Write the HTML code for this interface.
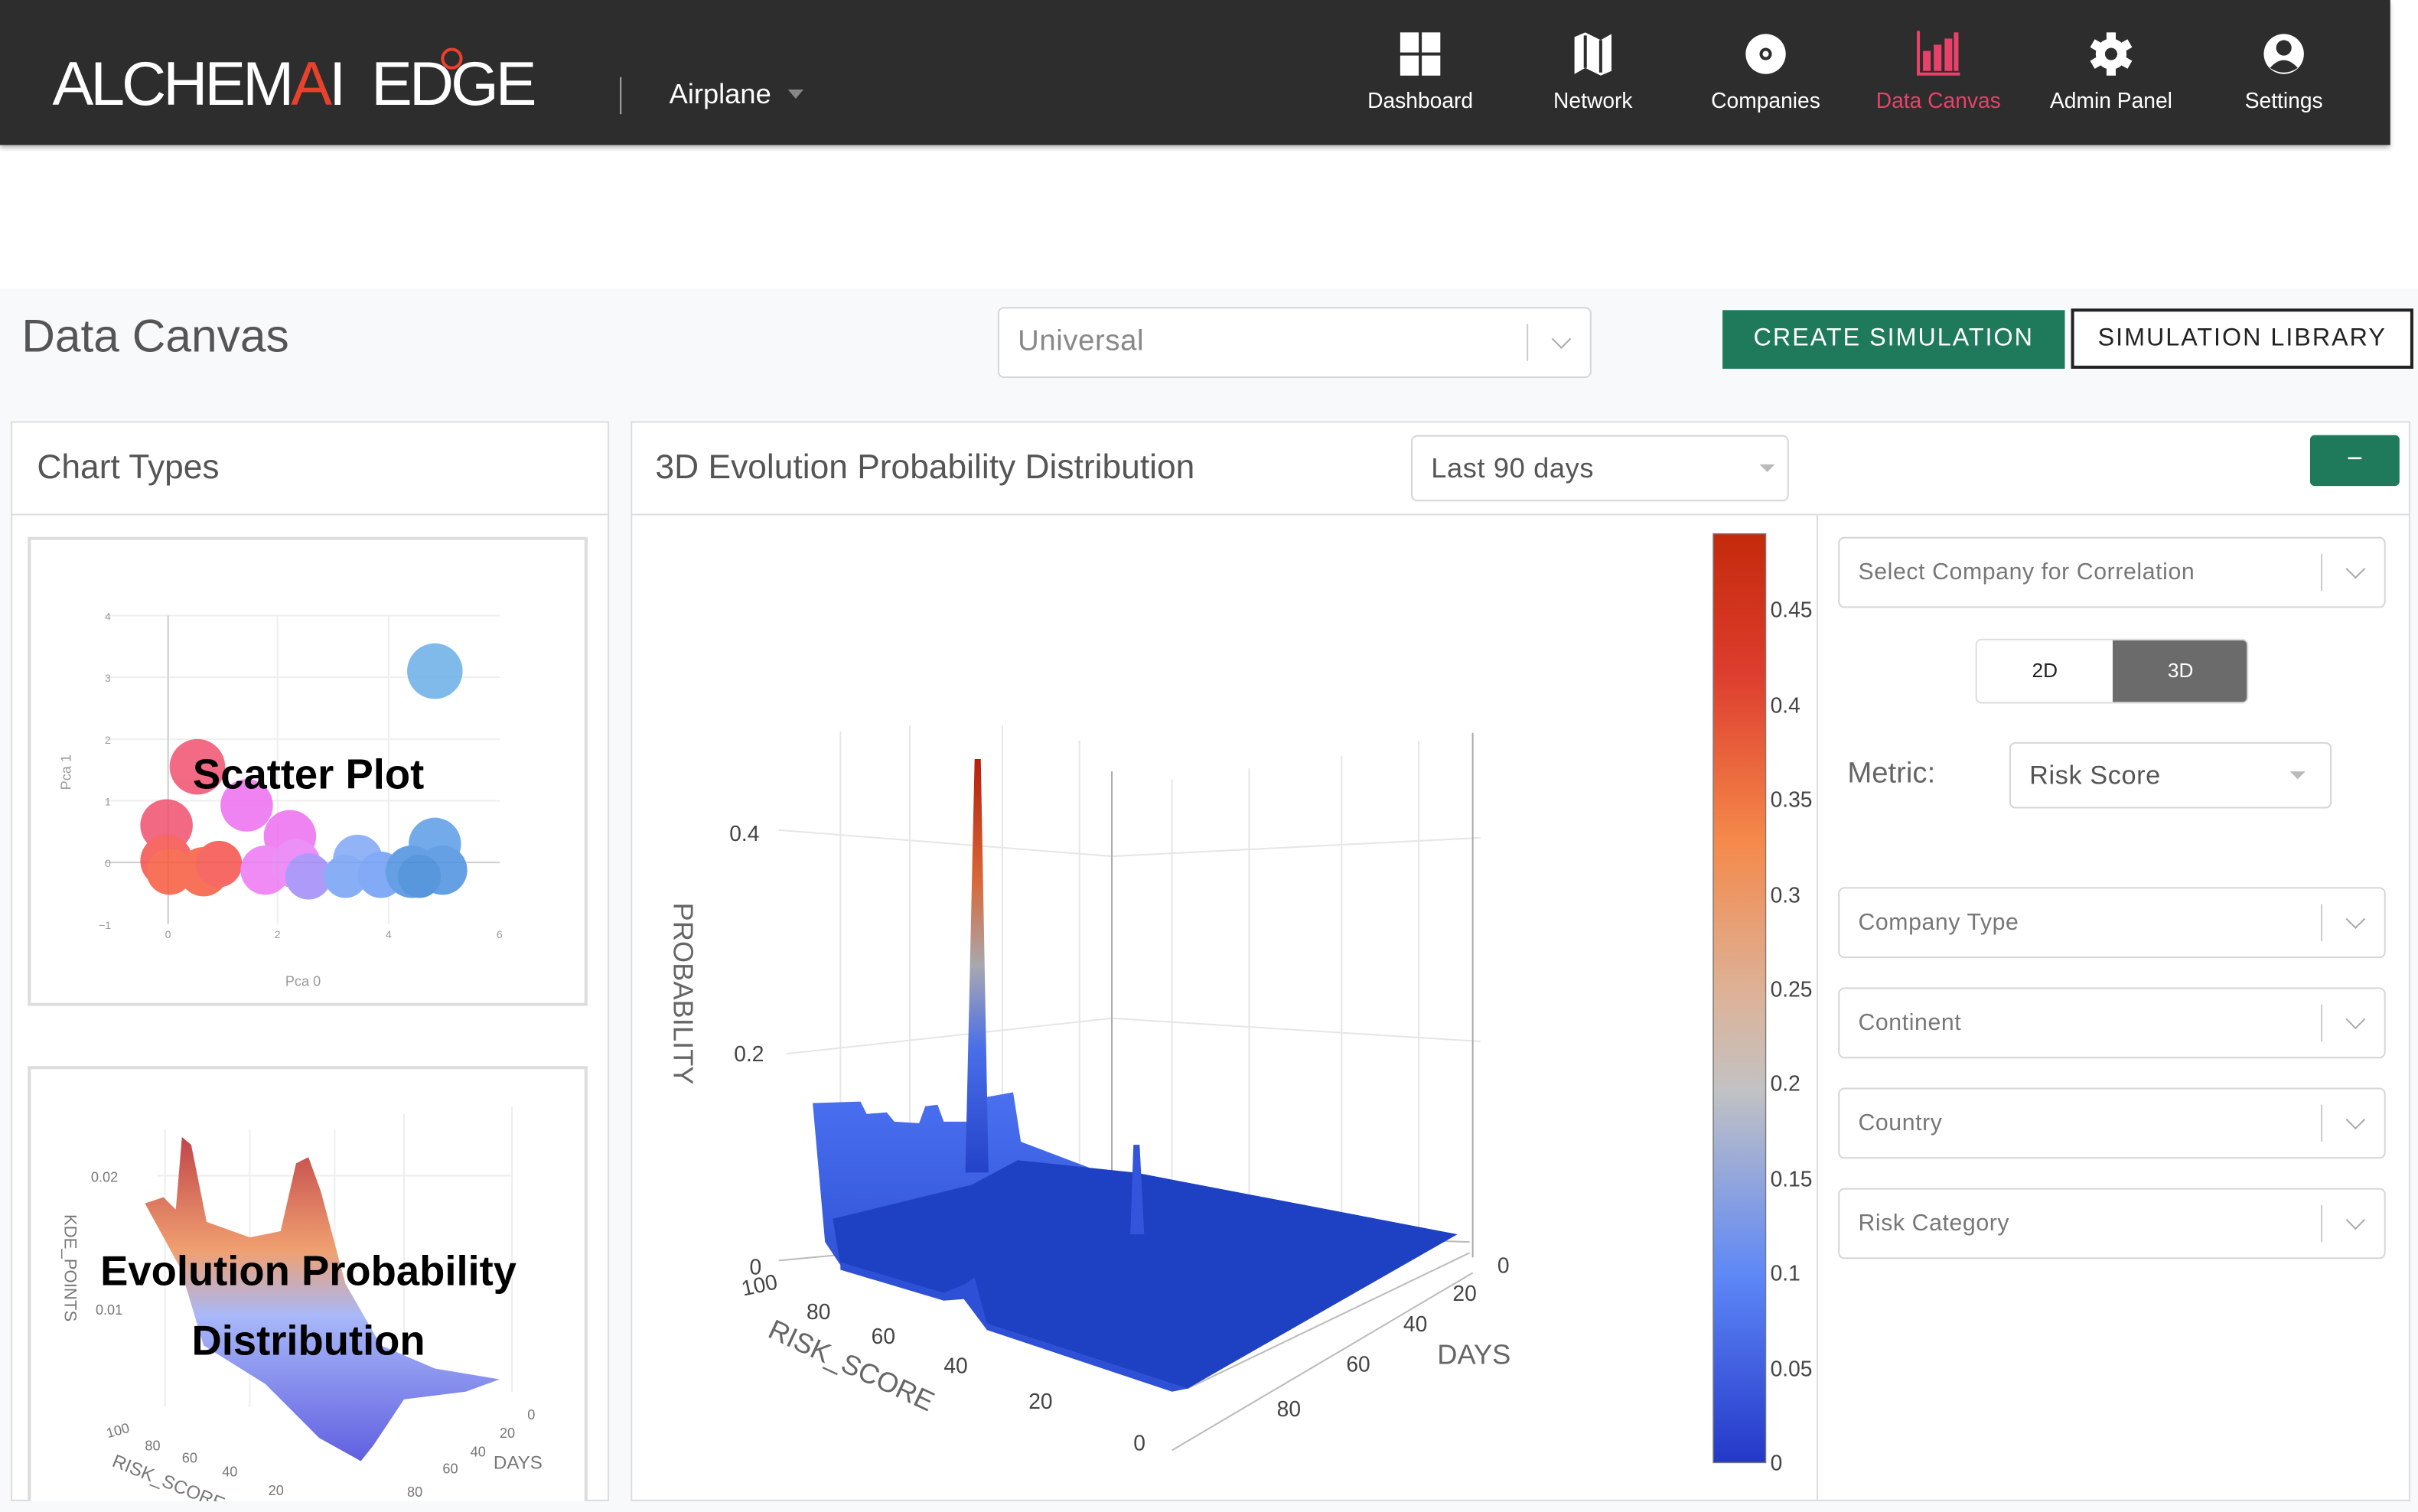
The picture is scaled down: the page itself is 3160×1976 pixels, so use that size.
<!DOCTYPE html>
<html><head><meta charset="utf-8">
<style>
*{box-sizing:border-box;margin:0;padding:0}
html,body{width:3160px;height:1976px;overflow:hidden;background:#fff;font-family:"Liberation Sans",sans-serif}
#root{position:absolute;left:0;top:0;width:1568px;height:980px;transform-origin:0 0;transform:scale(2.01531,2.01633);background:#fff}
.abs{position:absolute}
.nav{left:0;top:0;width:1550px;height:94px;background:#2d2d2d;box-shadow:0 2px 3px rgba(0,0,0,.3)}
.navitem{position:absolute;top:20px;width:110px;text-align:center;color:#fff;font-size:14px}
.navitem svg{display:block;margin:0 auto 7px;height:30px}
.bg{left:0;top:187px;width:1568px;height:793px;background:#f8f9fb}
.sel{position:absolute;background:#fff;border:1px solid #d6d6d6;border-radius:4px;color:#777;font-size:15px}
.sel .t{position:absolute;left:12px;top:50%;transform:translateY(-50%);letter-spacing:.3px}
.sel .bar{position:absolute;right:40px;top:10px;bottom:10px;width:1px;background:#ccc}
.sel .chev{position:absolute;right:14px;top:50%;width:9px;height:9px;border-right:1.5px solid #aaa;border-bottom:1.5px solid #aaa;transform:translateY(-75%) rotate(45deg)}
.panel{position:absolute;background:#fff;border:1px solid #ddd}
</style></head><body><div id="root">

<div class="abs nav">
  <div class="abs" style="left:34px;top:33px;color:#fff;font-size:40px;line-height:44px;letter-spacing:-2px">ALCHEM<span style="color:#e8412c">A</span>I&nbsp;&nbsp;ED<span style="position:relative">G<span style="position:absolute;left:-6px;top:-2px;width:14px;height:14px;border:2px solid #e8412c;border-radius:50%"></span></span>E</div>
  <div class="abs" style="left:402px;top:50px;width:1px;height:24px;background:#aaa"></div>
  <div class="abs" style="left:434px;top:51px;color:#fff;font-size:18px">Airplane</div>
  <div class="abs" style="left:511px;top:58px;width:0;height:0;border-left:5px solid transparent;border-right:5px solid transparent;border-top:6px solid #888"></div>

  <div class="navitem" style="left:866px"><svg width="28" viewBox="0 0 28 30"><rect x="1" y="1" width="12" height="13" fill="#fff"/><rect x="15" y="1" width="12" height="13" fill="#fff"/><rect x="1" y="16" width="12" height="13" fill="#fff"/><rect x="15" y="16" width="12" height="13" fill="#fff"/></svg>Dashboard</div>
  <div class="navitem" style="left:978px"><svg width="28" viewBox="0 0 28 30"><path d="M2 4 L9 1 L19 6 L26 2 L26 26 L19 29 L9 24 L2 28 Z" fill="#fff"/><path d="M9 3 L9 24 M19 6 L19 27" stroke="#2d2d2d" stroke-width="2"/></svg>Network</div>
  <div class="navitem" style="left:1090px"><svg width="28" viewBox="0 0 28 30"><circle cx="14" cy="15" r="13" fill="#fff"/><circle cx="14" cy="15" r="4" fill="#2d2d2d"/><circle cx="14" cy="15" r="2" fill="#fff"/></svg>Companies</div>
  <div class="navitem" style="left:1202px;color:#e8416a"><svg width="30" viewBox="0 0 30 30"><path d="M2 0 V28 H29" stroke="#e8416a" stroke-width="2" fill="none"/><rect x="5" y="13" width="5" height="13" fill="#e8416a"/><rect x="12" y="9" width="5" height="17" fill="#e8416a"/><rect x="19" y="5" width="5" height="21" fill="#e8416a"/><rect x="25" y="1" width="3" height="25" fill="#e8416a"/></svg>Data Canvas</div>
  <div class="navitem" style="left:1314px"><svg width="28" viewBox="0 0 28 30"><g transform="translate(14 15)"><g fill="#fff"><rect x="-3" y="-14" width="6" height="28"/><rect x="-3" y="-14" width="6" height="28" transform="rotate(60)"/><rect x="-3" y="-14" width="6" height="28" transform="rotate(120)"/><circle r="10"/></g><circle r="4" fill="#2d2d2d"/></g></svg>Admin Panel</div>
  <div class="navitem" style="left:1426px"><svg width="28" viewBox="0 0 28 30"><circle cx="14" cy="15" r="13" fill="#fff"/><circle cx="14" cy="11" r="5" fill="#2d2d2d"/><path d="M5 24 Q14 14 23 24 Q14 30 5 24Z" fill="#2d2d2d"/></svg>Settings</div>
</div>

<div class="abs bg"></div>
<div class="abs" style="left:14px;top:202px;font-size:30px;color:#555">Data Canvas</div>
<div class="sel" style="left:647px;top:199px;width:385px;height:46px;font-size:19px;color:#888"><span class="t">Universal</span><span class="bar"></span><span class="chev"></span></div>
<div class="abs" style="left:1117px;top:201px;width:222px;height:38px;background:#1e7a5a;color:#fff;font-size:16px;letter-spacing:1px;text-align:center;line-height:38px">CREATE SIMULATION</div>
<div class="abs" style="left:1343px;top:200px;width:222px;height:39px;border:2px solid #222;background:#fff;color:#222;font-size:16px;letter-spacing:1px;text-align:center;line-height:35px">SIMULATION LIBRARY</div>

<div class="panel" style="left:7px;top:273px;width:388px;height:700px"></div>
<div class="abs" style="left:7px;top:333px;width:388px;height:1px;background:#ddd"></div>
<div class="abs" style="left:24px;top:290px;font-size:22px;color:#555">Chart Types</div>

<div class="abs" style="left:18px;top:348px;width:363px;height:304px;border:2px solid #ddd;background:#fff">
<svg width="359" height="300" viewBox="18 348 359 300" style="position:absolute;left:0;top:0">
 <g stroke="#eee"><line x1="66" y1="397" x2="322" y2="397"/><line x1="66" y1="437" x2="322" y2="437"/><line x1="66" y1="477" x2="322" y2="477"/><line x1="66" y1="517" x2="322" y2="517"/><line x1="178" y1="397" x2="178" y2="597"/><line x1="250" y1="397" x2="250" y2="597"/></g>
 <line x1="107" y1="397" x2="107" y2="597" stroke="#ccc"/><line x1="66" y1="557" x2="322" y2="557" stroke="#ccc"/>
 <g font-size="7" fill="#999"><text x="66" y="400">4</text><text x="66" y="440">3</text><text x="66" y="480">2</text><text x="66" y="520">1</text><text x="66" y="560">0</text><text x="62" y="600">−1</text><text x="105" y="606">0</text><text x="176" y="606">2</text><text x="248" y="606">4</text><text x="320" y="606">6</text><text x="183" y="637" font-size="9">Pca 0</text><text x="44" y="510" font-size="9" transform="rotate(-90 44 510)">Pca 1</text></g>
 <g opacity="0.85">
 <circle cx="280" cy="433" r="18" fill="#6aaee6"/>
 <circle cx="126" cy="495" r="18" fill="#f0506e"/>
 <circle cx="106" cy="533" r="17" fill="#f0506e"/><circle cx="106" cy="556" r="17" fill="#f5504a"/><circle cx="108" cy="563" r="15" fill="#f65a3c"/><circle cx="130" cy="563" r="16" fill="#f65a3c"/><circle cx="140" cy="558" r="15" fill="#f5504a"/>
 <circle cx="158" cy="520" r="17" fill="#ee6ef0"/><circle cx="186" cy="540" r="17" fill="#ee6ef0"/><circle cx="170" cy="562" r="16" fill="#ee77f5"/><circle cx="190" cy="558" r="16" fill="#e97cf5"/>
 <circle cx="198" cy="566" r="15" fill="#a08af8"/><circle cx="230" cy="555" r="16" fill="#7fa8f5"/><circle cx="222" cy="566" r="14" fill="#74a0f5"/><circle cx="245" cy="565" r="15" fill="#6e9cf5"/>
 <circle cx="280" cy="545" r="17" fill="#5b9ce6"/><circle cx="265" cy="563" r="17" fill="#4b90e0"/><circle cx="285" cy="562" r="16" fill="#4b90e0"/><circle cx="270" cy="566" r="14" fill="#3d86d8"/></g>
 <text x="198" y="509" font-size="27" fill="#000" text-anchor="middle" font-weight="bold">Scatter Plot</text>
</svg></div>

<div class="abs" style="left:18px;top:691px;width:363px;height:282px;border:2px solid #ddd;border-bottom:none;background:#fff;overflow:hidden">
<svg width="359" height="282" viewBox="18 691 359 282" style="position:absolute;left:0;top:0">
 <defs><linearGradient id="eg" x1="0" y1="0" x2="0" y2="1"><stop offset="0" stop-color="#c0454a"/><stop offset="0.35" stop-color="#f0a070"/><stop offset="0.55" stop-color="#a8b8f8"/><stop offset="1" stop-color="#6060e0"/></linearGradient></defs>
 <g stroke="#eee"><line x1="105" y1="730" x2="105" y2="910"/><line x1="160" y1="730" x2="160" y2="910"/><line x1="215" y1="730" x2="215" y2="910"/><line x1="260" y1="720" x2="260" y2="900"/><line x1="330" y1="715" x2="330" y2="900"/><line x1="100" y1="760" x2="330" y2="760"/></g>
 <path d="M92 778 L104 774 L112 782 L116 735 L122 740 L132 790 L160 800 L180 796 L190 752 L198 748 L206 770 L222 830 L245 870 L280 885 L322 892 L300 900 L260 905 L240 935 L232 945 L205 930 L170 895 L130 870 L115 820 Z" fill="url(#eg)"/>
 <g font-size="9" fill="#777"><text x="57" y="764">0.02</text><text x="60" y="850">0.01</text><text x="40" y="785" transform="rotate(90 40 785)" font-size="11">KDE_POINTS</text>
 <text x="68" y="930" transform="rotate(-15 68 930)">100</text><text x="92" y="938">80</text><text x="116" y="946">60</text><text x="142" y="955">40</text><text x="172" y="967">20</text><text x="340" y="918">0</text><text x="322" y="930">20</text><text x="303" y="942">40</text><text x="285" y="953">60</text><text x="262" y="968">80</text><text x="318" y="950" font-size="12">DAYS</text><text x="70" y="948" font-size="12" transform="rotate(22 70 948)">RISK_SCORE</text></g>
 <text x="198" y="831" font-size="27" fill="#000" text-anchor="middle" font-weight="bold">Evolution Probability</text>
 <text x="198" y="876" font-size="27" fill="#000" text-anchor="middle" font-weight="bold">Distribution</text>
</svg></div>

<div class="panel" style="left:409px;top:273px;width:1154px;height:700px"></div>
<div class="abs" style="left:409px;top:333px;width:1154px;height:1px;background:#ddd"></div>
<div class="abs" style="left:1178px;top:333px;width:1px;height:640px;background:#ddd"></div>
<div class="abs" style="left:425px;top:290px;font-size:22px;color:#555">3D Evolution Probability Distribution</div>
<div class="sel" style="left:915px;top:282px;width:245px;height:43px;font-size:18px;color:#555"><span class="t">Last 90 days</span><span style="position:absolute;right:8px;top:18px;border-left:5px solid transparent;border-right:5px solid transparent;border-top:5px solid #bbb"></span></div>
<div class="abs" style="left:1498px;top:282px;width:58px;height:33px;background:#1e7a5a;border-radius:3px;color:#fff;text-align:center;line-height:30px;font-size:18px">−</div>

<svg class="abs" style="left:0;top:0" width="1568" height="980" viewBox="0 0 1568 980">
 <defs>
  <linearGradient id="cb" x1="0" y1="0" x2="0" y2="1"><stop offset="0" stop-color="#c42a0b"/><stop offset="0.15" stop-color="#dd3d2e"/><stop offset="0.33" stop-color="#f5894a"/><stop offset="0.5" stop-color="#dcb39a"/><stop offset="0.6" stop-color="#c2c2c4"/><stop offset="0.8" stop-color="#5d87f7"/><stop offset="1" stop-color="#2438c8"/></linearGradient>
  <linearGradient id="sp" x1="0" y1="0" x2="0" y2="1"><stop offset="0" stop-color="#b51e0c"/><stop offset="0.3" stop-color="#d86a3a"/><stop offset="0.5" stop-color="#a8a8b0"/><stop offset="0.7" stop-color="#4a6ee8"/><stop offset="1" stop-color="#2442c8"/></linearGradient>
  <linearGradient id="wall" x1="0" y1="0" x2="0" y2="1"><stop offset="0" stop-color="#4a70f0"/><stop offset="1" stop-color="#1f3fc4"/></linearGradient>
 </defs>
 <rect x="1111" y="346" width="34" height="602" fill="url(#cb)" stroke="#777" stroke-width="0.7"/>
 <g stroke="#e6e6e6" fill="none">
  <line x1="545" y1="474" x2="545" y2="812"/><line x1="590" y1="470" x2="590" y2="805"/><line x1="650" y1="470" x2="650" y2="800"/><line x1="700" y1="480" x2="700" y2="795"/><line x1="760" y1="505" x2="760" y2="795"/><line x1="810" y1="498" x2="810" y2="800"/><line x1="870" y1="490" x2="870" y2="810"/><line x1="920" y1="480" x2="920" y2="815"/>
  <line x1="505" y1="538" x2="721" y2="555"/><line x1="721" y1="555" x2="960" y2="543"/><line x1="510" y1="683" x2="721" y2="660"/><line x1="721" y1="660" x2="960" y2="675"/>
 </g>
 <g stroke="#aaa"><line x1="721" y1="500" x2="721" y2="797"/><line x1="955" y1="475" x2="955" y2="815"/></g>
 <g stroke="#bbb"><line x1="505" y1="817" x2="721" y2="797"/><line x1="721" y1="797" x2="953" y2="805"/><line x1="953" y1="812" x2="770" y2="900"/><line x1="760" y1="940" x2="955" y2="825"/></g>
 <path d="M527 715 L558 714 L562 722 L575 721 L580 727 L596 728 L600 717 L608 716 L612 727 L628 727 L640 711 L657 708 L662 740 L720 762 L736 760 L945 800 L770 900 L640 858 L632 832 L625 838 L612 838 L545 820 L535 805 Z" fill="url(#wall)"/>
 <path d="M630 768 L660 752 L736 760 L945 800 L770 900 L640 858 L632 832 L625 838 L612 838 L545 820 L540 790 Z" fill="#1e40c2"/>
 <path d="M545 818 L612 838 L626 832 L632 828 L640 858 L770 900 L760 902 L640 862 L625 842 L612 843 L545 823Z" fill="#2e50d6"/>
 <path d="M632 492 L636 492 L641 760 L626 760 Z" fill="url(#sp)"/>
 <path d="M735 742 L739 742 L742 800 L733 800 Z" fill="#3454dc"/>
 <g font-size="14" fill="#444">
  <text x="473" y="545">0.4</text><text x="476" y="688">0.2</text>
  <text x="486" y="826">0</text><text x="482" y="840" transform="rotate(-12 482 840)">100</text><text x="523" y="855">80</text><text x="565" y="871">60</text><text x="612" y="890">40</text><text x="667" y="913">20</text><text x="735" y="940">0</text>
  <text x="971" y="825">0</text><text x="942" y="843">20</text><text x="910" y="863">40</text><text x="873" y="889">60</text><text x="828" y="918">80</text>
  <text x="932" y="884" font-size="18" fill="#666">DAYS</text>
  <text x="497" y="866" font-size="18" fill="#666" transform="rotate(25 497 866)">RISK_SCORE</text>
  <text x="437" y="585" font-size="18" fill="#666" transform="rotate(90 437 585)">PROBABILITY</text>
 </g>
 <g font-size="14" fill="#444">
  <text x="1148" y="400">0.45</text><text x="1148" y="462">0.4</text><text x="1148" y="523">0.35</text><text x="1148" y="585">0.3</text><text x="1148" y="646">0.25</text><text x="1148" y="707">0.2</text><text x="1148" y="769">0.15</text><text x="1148" y="830">0.1</text><text x="1148" y="892">0.05</text><text x="1148" y="953">0</text>
 </g>
</svg>

<div class="sel" style="left:1192px;top:348px;width:355px;height:46px"><span class="t">Select Company for Correlation</span><span class="bar"></span><span class="chev"></span></div>
<div class="abs" style="left:1281px;top:414px;width:177px;height:42px;border:1px solid #ddd;border-radius:4px;background:#fff;overflow:hidden;font-size:13px">
 <div class="abs" style="left:0;top:0;width:88px;height:40px;line-height:40px;text-align:center;color:#222">2D</div>
 <div class="abs" style="left:88px;top:0;width:88px;height:40px;line-height:40px;text-align:center;background:#6b6b6b;color:#fff">3D</div>
</div>
<div class="abs" style="left:1198px;top:491px;font-size:19px;color:#666">Metric:</div>
<div class="sel" style="left:1303px;top:481px;width:209px;height:43px;font-size:17px;color:#555"><span class="t">Risk Score</span><span style="position:absolute;right:16px;top:18px;border-left:5px solid transparent;border-right:5px solid transparent;border-top:5px solid #bbb"></span></div>
<div class="sel" style="left:1192px;top:575px;width:355px;height:46px"><span class="t">Company Type</span><span class="bar"></span><span class="chev"></span></div>
<div class="sel" style="left:1192px;top:640px;width:355px;height:46px"><span class="t">Continent</span><span class="bar"></span><span class="chev"></span></div>
<div class="sel" style="left:1192px;top:705px;width:355px;height:46px"><span class="t">Country</span><span class="bar"></span><span class="chev"></span></div>
<div class="sel" style="left:1192px;top:770px;width:355px;height:46px"><span class="t">Risk Category</span><span class="bar"></span><span class="chev"></span></div>

</div></body></html>
